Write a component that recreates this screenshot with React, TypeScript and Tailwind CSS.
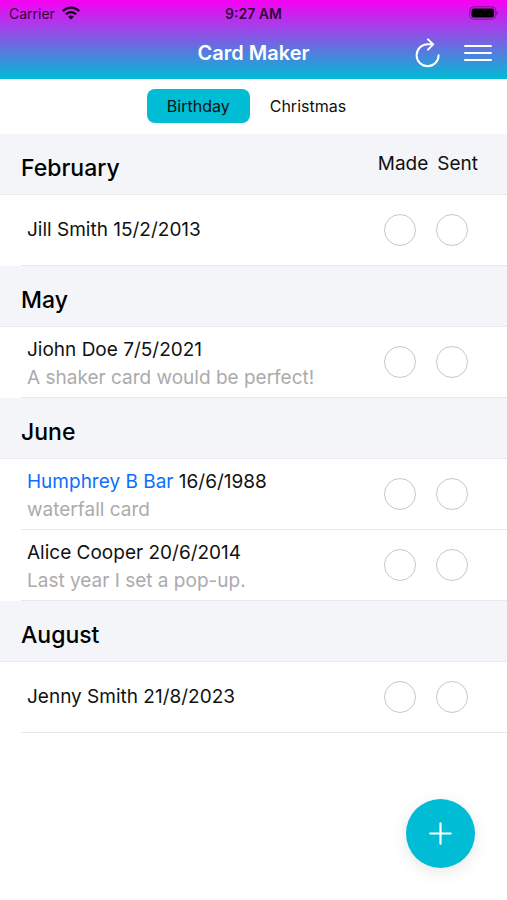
import { useState } from "react";

type Card = { name: string; date: string; note?: string; linked?: boolean };
type Month = { month: string; cards: Card[] };

const months: Month[] = [
  { month: "February", cards: [{ name: "Jill Smith", date: "15/2/2013" }] },
  {
    month: "May",
    cards: [{ name: "Jiohn Doe", date: "7/5/2021", note: "A shaker card would be perfect!" }],
  },
  {
    month: "June",
    cards: [
      { name: "Humphrey B Bar", date: "16/6/1988", note: "waterfall card", linked: true },
      { name: "Alice Cooper", date: "20/6/2014", note: "Last year I set a pop-up." },
    ],
  },
  { month: "August", cards: [{ name: "Jenny Smith", date: "21/8/2023" }] },
];

const tabs = ["Birthday", "Christmas"];

function StatusBar() {
  return (
    <div className="grid h-[26px] grid-cols-3 items-center px-[9px] text-[14px] text-black/80">
      <div className="flex items-center gap-[7px]">
        <span>Carrier</span>
        <svg className="h-[14px] w-[18px]" viewBox="0 0 18 14" fill="none" stroke="#12001a" strokeWidth="2.4" aria-hidden="true">
          <path d="M0.9 5.1C5.4 0.4 12.6 0.4 17.1 5.1" />
          <path d="M4 8.3C6.8 5.4 11.2 5.4 14 8.3" />
          <path d="M9 13.6 6.2 10.7C7.8 9.2 10.2 9.2 11.8 10.7Z" fill="#12001a" stroke="none" />
        </svg>
      </div>
      <span className="text-center font-semibold">9:27 AM</span>
      <svg className="h-[14px] w-[30px] justify-self-end" viewBox="0 0 30 14" aria-hidden="true">
        <rect x="1.8" y="0.8" width="26" height="12.4" rx="4" fill="none" stroke="#000" strokeOpacity="0.4" />
        <rect x="3.5" y="2.5" width="22.6" height="9" rx="2.2" fill="#000" />
        <path d="M28.6 5v4c1.4-.6 1.4-3.4 0-4Z" fill="#000" fillOpacity="0.45" />
      </svg>
    </div>
  );
}

function Header() {
  return (
    <header className="bg-linear-to-b/srgb from-[#f800f4] to-[#00bcd4]">
      <StatusBar />
      <div className="grid h-[53px] grid-cols-[1fr_auto_1fr] items-center px-[15px]">
        <h1 className="col-start-2 text-[20px] font-semibold text-white">Card Maker</h1>
        <div className="flex items-center justify-end gap-6">
          <button type="button" aria-label="Refresh">
            <svg className="h-[30px] w-[25px]" viewBox="0 0 25 30" fill="none" stroke="#fff" strokeWidth="2" strokeLinecap="round" strokeLinejoin="round">
              <path d="M23.6 17.2A11 11 0 1 1 12.6 6.2H17.8" />
              <path d="M13 1.4 18.2 6.4 13 11.6" />
            </svg>
          </button>
          <button type="button" aria-label="Menu">
            <svg className="h-[30px] w-7" viewBox="0 0 28 30" stroke="#fff" strokeWidth="2" strokeLinecap="round">
              <path d="M1 8h26M1 15h26M1 22h26" />
            </svg>
          </button>
        </div>
      </div>
    </header>
  );
}

function StatusCheck({ label }: { label: string }) {
  return (
    <input
      type="checkbox"
      aria-label={label}
      className="size-8 appearance-none rounded-full border border-[#c8c8c8] bg-white checked:border-[#00bcd4] checked:bg-[#00bcd4]"
    />
  );
}

function CardRow({ card }: { card: Card }) {
  return (
    <li className="pl-[21px]">
      <div className="flex h-[71px] items-center justify-between border-b border-[#e9e9ed] pr-[39px] pl-[6px]">
        <div className={card.note ? "pt-[3px] text-[19px] leading-7" : "text-[19px] leading-7"}>
          <p className="text-[#111]">
            {card.linked ? (
              <a href="#contact" className="text-[#0d6efd]">
                {card.name}
              </a>
            ) : (
              card.name
            )}{" "}
            {card.date}
          </p>
          {card.note && <p className="text-[#ababab]">{card.note}</p>}
        </div>
        <div className="flex gap-5">
          <StatusCheck label={`${card.name} made`} />
          <StatusCheck label={`${card.name} sent`} />
        </div>
      </div>
    </li>
  );
}

export default function App() {
  const [active, setActive] = useState("Birthday");
  return (
    <div className="min-h-screen bg-white font-['Inter','Liberation_Sans',sans-serif] text-black">
      <Header />
      <nav className="flex h-[55px] items-center justify-center pb-[2px] pl-[6px]">
        {tabs.map((tab) => (
          <button
            key={tab}
            type="button"
            onClick={() => setActive(tab)}
            className={
              tab === active
                ? "h-[34px] rounded-lg bg-[#00bcd4] px-5 text-[16px] text-[#111]"
                : "h-[34px] rounded-lg px-5 text-[16px] text-[#111]"
            }
          >
            {tab}
          </button>
        ))}
      </nav>
      <main>
        {months.map(({ month, cards }, index) => (
          <section key={month}>
            <div className="flex h-[61px] items-center justify-between border-b border-[#ececf0] bg-[#f4f5f9] pt-[8px] pr-[29px] pl-[21px]">
              <h2 className="text-[23px] leading-8 font-medium">{month}</h2>
              {index === 0 && (
                <div className="flex gap-[9px] pb-[8px] text-[19px] text-[#111]">
                  <span>Made</span>
                  <span>Sent</span>
                </div>
              )}
            </div>
            <ul>
              {cards.map((card) => (
                <CardRow key={card.name} card={card} />
              ))}
            </ul>
          </section>
        ))}
      </main>
      <button
        type="button"
        aria-label="Add card"
        className="fixed right-8 bottom-8 grid size-[69px] place-items-center rounded-full bg-[#00bcd4] shadow-[0_4px_16px_rgba(0,0,0,0.10)]"
      >
        <svg className="size-[23px]" viewBox="0 0 23 23" stroke="#fff" strokeWidth="2.2" strokeLinecap="round" aria-hidden="true">
          <path d="M11.5 1.3v20.4M1.3 11.5h20.4" />
        </svg>
      </button>
    </div>
  );
}
